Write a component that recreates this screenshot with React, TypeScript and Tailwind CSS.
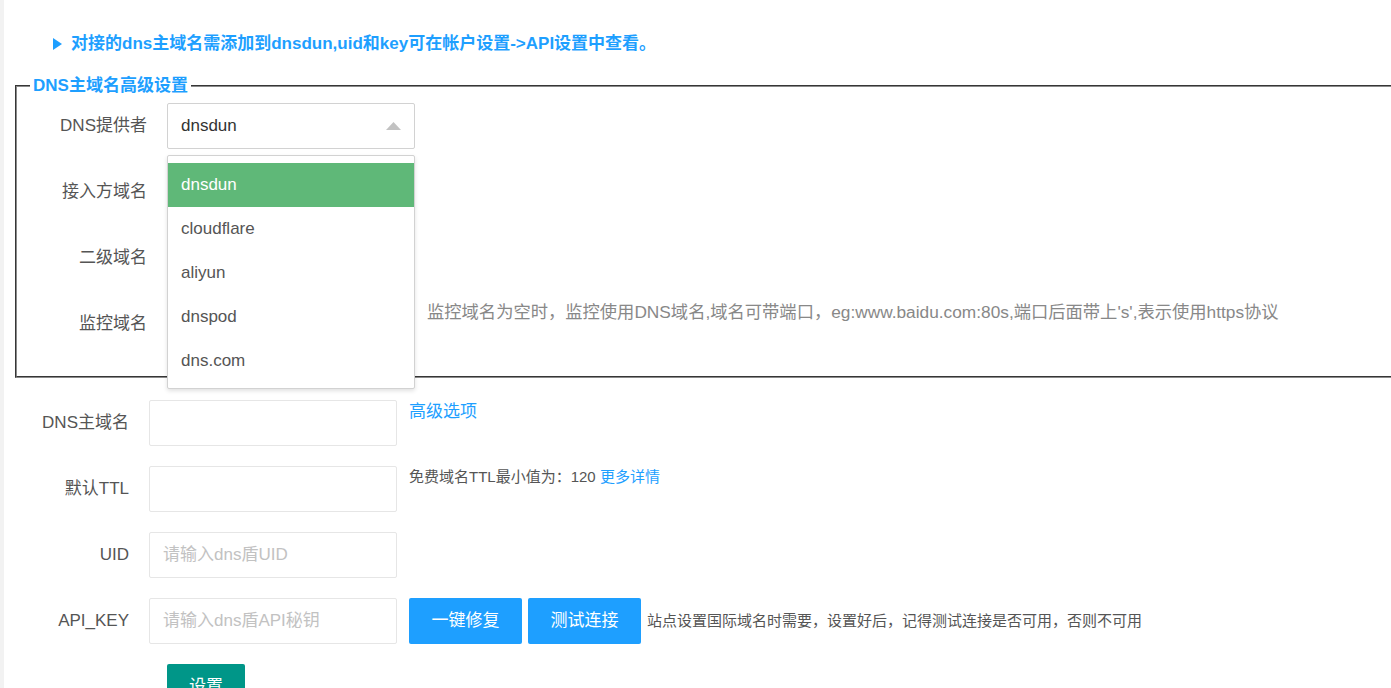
import React from "react";

const FONT = { fontFamily: '"Liberation Sans", Arial, "Noto Sans CJK SC", sans-serif' };

function Label({ children, w }: { children: React.ReactNode; w: string }) {
  return (
    <div className={`${w} shrink-0 pr-[20px] text-right text-[17px] leading-[46px] text-[#555]`}>{children}</div>
  );
}

function Input({ placeholder }: { placeholder?: string }) {
  return (
    <div className="h-[46px] w-[248px] shrink-0 rounded-[2px] border border-[#e6e6e6] bg-white pl-[13px] text-[17px] leading-[44px] text-[#c2c2c2]">
      {placeholder}
    </div>
  );
}

export default function App() {
  const options = ["dnsdun", "cloudflare", "aliyun", "dnspod", "dns.com"];
  return (
    <div className="h-[688px] w-[1391px] overflow-hidden border-l-4 border-[#f2f2f2] bg-white" style={FONT}>
      {/* notice */}
      <div className="flex items-center pl-[49px] pt-[32px] text-[17px] font-bold leading-[24px] text-[#1E9FFF]">
        <svg width="9" height="12" viewBox="0 0 9 12" className="mr-[9px]">
          <polygon points="0,0 9,6 0,12" fill="#1E9FFF" />
        </svg>
        <span>对接的dns主域名需添加到dnsdun,uid和key可在帐户设置-&gt;API设置中查看。</span>
      </div>

      {/* fieldset */}
      <fieldset className="ml-[11px] mt-[18px] w-[1400px] border-2 border-[#8a8a8a] pb-[29px] pt-[5px] [border-style:groove]">
        <legend className="ml-[13px] px-[3px] text-[17px] font-bold leading-[24px] text-[#1E9FFF]">DNS主域名高级设置</legend>
        <div className="flex flex-col gap-[20px]">
          <div className="flex items-start">
            <Label w="w-[150px]">DNS提供者</Label>
            <div className="relative">
              <div className="flex h-[46px] w-[248px] items-center justify-between rounded-[2px] border border-[#d2d2d2] bg-white pl-[13px] pr-[13px] text-[17px] text-[#333]">
                <span>dnsdun</span>
                <svg width="15" height="8" viewBox="0 0 15 8">
                  <polygon points="0,8 7.5,0 15,8" fill="#c2c2c2" />
                </svg>
              </div>
              <div className="absolute left-0 top-[52px] z-10 w-[248px] rounded-[2px] border border-[#d2d2d2] bg-white pb-[5px] pt-[7px] shadow-[0_2px_4px_rgba(0,0,0,0.12)]">
                {options.map((o, i) => (
                  <div
                    key={o}
                    className={
                      i === 0
                        ? "h-[44px] bg-[#5FB878] pl-[13px] text-[17px] leading-[44px] text-white"
                        : "h-[44px] pl-[13px] text-[17px] leading-[44px] text-[#555]"
                    }
                  >
                    {o}
                  </div>
                ))}
              </div>
            </div>
          </div>
          <div className="flex items-start">
            <Label w="w-[150px]">接入方域名</Label>
            <Input />
          </div>
          <div className="flex items-start">
            <Label w="w-[150px]">二级域名</Label>
            <Input />
          </div>
          <div className="flex items-start">
            <Label w="w-[150px]">监控域名</Label>
            <Input />
            <div className="ml-[12px] text-[17.3px] leading-[22px] text-[#888]">
              监控域名为空时，监控使用DNS域名,域名可带端口，eg:www.baidu.com:80s,端口后面带上's',表示使用https协议
            </div>
          </div>
        </div>
      </fieldset>

      {/* outer form */}
      <div className="mt-[22px] flex flex-col gap-[20px]">
        <div className="flex items-start">
          <Label w="w-[145px]">DNS主域名</Label>
          <Input />
          <a className="ml-[12px] text-[17px] leading-[24px] text-[#1E9FFF]">高级选项</a>
        </div>
        <div className="flex items-start">
          <Label w="w-[145px]">默认TTL</Label>
          <Input />
          <div className="ml-[12px] text-[15px] leading-[22px] text-[#555]">
            免费域名TTL最小值为：120 <span className="text-[#1E9FFF]">更多详情</span>
          </div>
        </div>
        <div className="flex items-start">
          <Label w="w-[145px]">UID</Label>
          <Input placeholder="请输入dns盾UID" />
        </div>
        <div className="flex items-center">
          <Label w="w-[145px]">API_KEY</Label>
          <Input placeholder="请输入dns盾API秘钥" />
          <button className="ml-[12px] h-[46px] w-[113px] rounded-[2px] bg-[#1E9FFF] text-[17px] text-white">一键修复</button>
          <button className="ml-[6px] h-[46px] w-[113px] rounded-[2px] bg-[#1E9FFF] text-[17px] text-white">测试连接</button>
          <div className="ml-[6px] text-[15px] text-[#555]">站点设置国际域名时需要，设置好后，记得测试连接是否可用，否则不可用</div>
        </div>
        <div className="flex">
          <div className="w-[163px] shrink-0" />
          <button className="h-[46px] w-[78px] rounded-[2px] bg-[#009688] text-[17px] text-white">设置</button>
        </div>
      </div>
    </div>
  );
}
